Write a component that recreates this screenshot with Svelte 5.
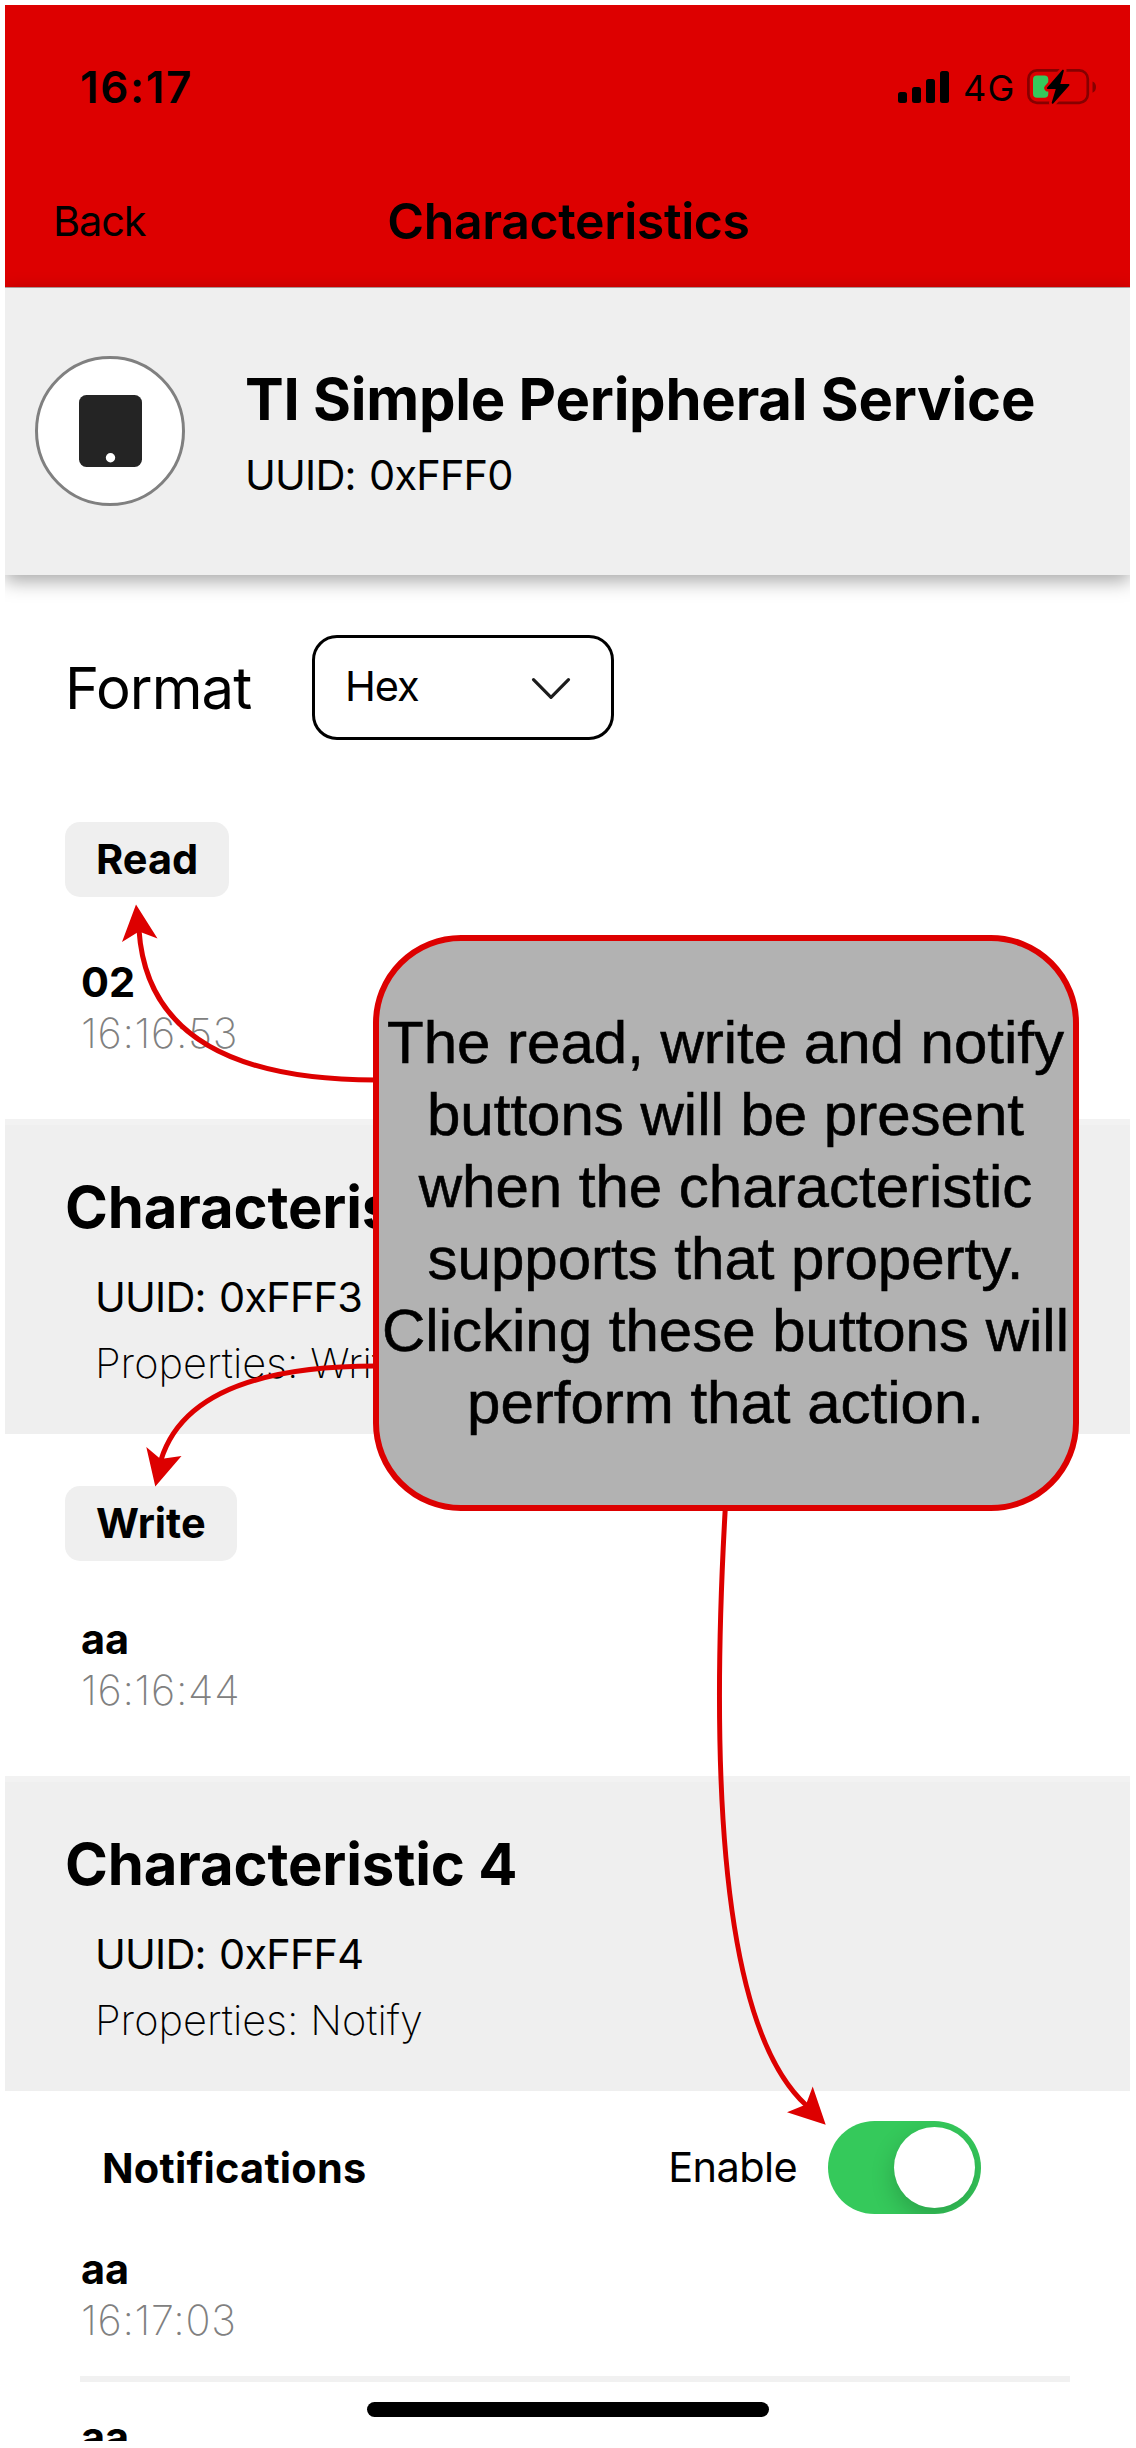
<script>
  const sections = [
    {
      action: 'Read',
      value: '02',
      time: '16:16:53'
    },
    {
      title: 'Characteristic 3',
      uuid: '0xFFF3',
      properties: 'Write',
      action: 'Write',
      value: 'aa',
      time: '16:16:44'
    },
    {
      title: 'Characteristic 4',
      uuid: '0xFFF4',
      properties: 'Notify',
      notify: true,
      value: 'aa',
      time: '16:17:03'
    }
  ];

  const note = [
    'The read, write and notify',
    'buttons will be present',
    'when the characteristic',
    'supports that property.',
    'Clicking these buttons will',
    'perform that action.'
  ];
</script>

<div class="page">
  <div class="screen">
    <header class="top">
      <div class="status">
        <span class="clock">16:17</span>
        <div class="indicators">
          <svg class="bars" width="51" height="32" viewBox="0 0 51 32">
            <rect x="0" y="21" width="9" height="11" rx="2.5" />
            <rect x="14" y="16" width="9" height="16" rx="2.5" />
            <rect x="28" y="8" width="9" height="24" rx="2.5" />
            <rect x="42" y="0" width="9" height="32" rx="2.5" />
          </svg>
          <span class="network">4G</span>
          <svg class="battery" width="70" height="38" viewBox="0 0 70 38">
            <rect x="1.4" y="2.4" width="59.4" height="32.400" rx="8.5" fill="none" stroke="#860000" stroke-width="2.7" />
            <path d="M65.500 13.500C68 14.300 69 16.600 69 19s-1 4.900-3.500 5.700z" fill="#860000" />
            <rect x="6" y="7.500" width="15.300" height="22.300" rx="4" fill="#35c95b" />
            <path class="bolt-gap" d="M36 2.500L20.800 20H30L25.600 34.800L41.600 16.800H32.200Z" />
            <path class="bolt" d="M36 2.500L20.800 20H30L25.600 34.800L41.600 16.800H32.200Z" />
          </svg>
        </div>
      </div>
      <nav class="nav">
        <span class="back">Back</span>
        <h1>Characteristics</h1>
      </nav>
    </header>

    <div class="service">
      <div class="avatar">
        <svg width="63" height="72" viewBox="0 0 63 72">
          <rect width="63" height="72" rx="7.500" fill="#242424" />
          <circle cx="31.500" cy="62.700" r="4.700" fill="#fff" />
        </svg>
      </div>
      <div>
        <h2>TI Simple Peripheral Service</h2>
        <p class="uuid">UUID: 0xFFF0</p>
      </div>
    </div>

    <div class="format">
      <span class="format-label">Format</span>
      <div class="select">
        <span>Hex</span>
        <svg width="40" height="24" viewBox="0 0 40 24">
          <path d="M2.500 3.700L20 21.300L37.500 3.700" fill="none" stroke="#1c1c1c" stroke-width="3.200" stroke-linecap="round" stroke-linejoin="round" />
        </svg>
      </div>
    </div>

    {#each sections as s}
      {#if s.title}
        <div class="band">
          <h3>{s.title}</h3>
          <p class="uuid">UUID: {s.uuid}</p>
          <p class="props">Properties: {s.properties}</p>
        </div>
      {/if}
      {#if s.notify}
        <div class="notify">
          <span class="notify-title">Notifications</span>
          <span class="enable">Enable</span>
          <span class="toggle"><span class="knob"></span></span>
        </div>
      {:else}
        <div class="action" class:first={!s.title}>
          <button>{s.action}</button>
        </div>
      {/if}
      <div class="entry">
        <div class="value">{s.value}</div>
        <div class="time">{s.time}</div>
      </div>
    {/each}
    <div class="divider"></div>
    <div class="entry next">
      <div class="value">aa</div>
    </div>
  </div>

  <div class="home"></div>

  <svg class="arrows" width="1136" height="2448" viewBox="0 0 1136 2448">
    <path class="line" d="M376 1080Q149 1080 139 930" />
    <path class="tip" d="M136 904.500L157.500 938.500L139 931.500L122 942Z" />
    <path class="line" d="M376 1366Q190 1366 161 1460" />
    <path class="tip" d="M155.300 1486.500L146.300 1447L160.500 1459L181.500 1456Z" />
    <path class="line" d="M725.300 1508Q697 2005 806 2105" />
    <path class="tip" d="M825.700 2124.800L787 2112.300L806 2104.500L812.700 2086.500Z" />
  </svg>

  <div class="callout">
    {#each note as line}
      <div>{line}</div>
    {/each}
  </div>
</div>

<style>
  :global(body) {
    background: #fff;
  }

  .page {
    position: relative;
    box-sizing: border-box;
    width: 1136px;
    height: 2448px;
    padding: 5px 6px 7px 5px;
    overflow: hidden;
    background: #fff;
    color: #000;
    font: 400 41.5px Inter, sans-serif;
  }

  .screen {
    height: 2436px;
    overflow: hidden;
    background: #fff;
  }

  h1,
  h2,
  h3,
  p {
    margin: 0;
  }

  .top {
    box-sizing: border-box;
    height: 283px;
    background: #d00;
    border-bottom: 1px solid #b9a5a5;
  }

  .status {
    display: flex;
    align-items: center;
    justify-content: space-between;
    height: 164px;
    padding: 0 33px 0 75px;
  }

  .clock {
    font-size: 44px;
    font-weight: 600;
    letter-spacing: 1.65px;
  }

  .indicators {
    display: flex;
    align-items: center;
  }

  .network {
    width: 64px;
    padding: 2px 0 0 14px;
    box-sizing: border-box;
    margin-right: 14px;
    font-size: 36px;
    letter-spacing: 1.2px;
  }

  .bolt-gap {
    fill: #d00;
    stroke: #d00;
    stroke-width: 7px;
    stroke-linejoin: round;
  }

  .bolt {
    stroke: #000;
    stroke-width: 1.8px;
    stroke-linejoin: round;
  }

  .nav {
    display: grid;
    grid-template-columns: 1fr auto 1fr;
    align-items: center;
    height: 104px;
    padding-left: 2px;
  }

  .back {
    padding-left: 46px;
    font-size: 41.5px;
    letter-spacing: -1.1px;
  }

  h1 {
    font-size: 50px;
    font-weight: 600;
    letter-spacing: -0.4px;
  }

  .service {
    position: relative;
    box-sizing: border-box;
    display: flex;
    align-items: center;
    gap: 60px;
    height: 287px;
    padding: 0 0 1px 30px;
    background: #efefef;
    box-shadow: 0 6px 18px rgba(0, 0, 0, 0.35);
  }

  .avatar {
    box-sizing: border-box;
    display: flex;
    align-items: center;
    justify-content: center;
    width: 150px;
    height: 150px;
    background: #fff;
    border: 3px solid #808080;
    border-radius: 50%;
  }

  h2 {
    font-size: 58px;
    line-height: 72px;
    letter-spacing: -0.23px;
    font-weight: 700;
  }

  .service .uuid {
    margin-top: 15px;
    line-height: 50px;
  }

  .uuid {
    letter-spacing: -0.82px;
    word-spacing: 2.5px;
  }

  .format {
    display: flex;
    align-items: center;
    padding: 60px 0 0 60px;
  }

  .format-label {
    width: 247px;
    font-size: 58px;
    letter-spacing: -0.93px;
  }

  .select {
    box-sizing: border-box;
    display: flex;
    align-items: center;
    justify-content: space-between;
    width: 302px;
    height: 105px;
    padding: 0 40px 0 30px;
    border: 3px solid #000;
    border-radius: 25px;
    letter-spacing: -1px;
  }

  .select span {
    padding-bottom: 3px;
  }

  .action {
    padding: 52px 0 53px 60px;
  }

  .action.first {
    padding: 82px 0 60px 60px;
  }

  button {
    display: block;
    height: 75px;
    padding: 0 31px 2px;
    border: 0;
    border-radius: 15px;
    background: #efefef;
    color: #000;
    font: 700 41.5px Inter, sans-serif;
  }

  .entry {
    padding: 0 0 60px 76px;
    line-height: 51px;
  }

  .value {
    font-weight: 700;
  }

  .time {
    font-weight: 200;
    color: #808080;
    letter-spacing: 0.7px;
  }

  .band {
    box-sizing: border-box;
    height: 315px;
    padding: 46px 0 0 60px;
    background: #efefef;
    border-top: 6px solid #f2f2f2;
  }

  h3 {
    margin-bottom: 21px;
    font-size: 58px;
    line-height: 72px;
    font-weight: 700;
    letter-spacing: -0.15px;
  }

  .band p {
    padding-left: 30px;
    line-height: 66px;
  }

  .props {
    font-weight: 200;
  }

  .notify {
    display: flex;
    align-items: center;
    padding: 30px 149px 30px 97px;
  }

  .notify-title {
    flex: 1;
    font-weight: 700;
    letter-spacing: 0.23px;
  }

  .enable {
    margin-right: 31px;
    padding-bottom: 2px;
    letter-spacing: -0.6px;
  }

  .toggle {
    box-sizing: border-box;
    display: flex;
    justify-content: flex-end;
    width: 153px;
    height: 93px;
    padding: 6px;
    border-radius: 47px;
    overflow: hidden;
    background: #35c95b;
  }

  .knob {
    width: 81px;
    height: 81px;
    border-radius: 50%;
    background: #fff;
    box-shadow: 0 9px 24px rgba(0, 0, 0, 0.2);
  }

  .divider {
    height: 6px;
    margin: -30px 60px 30px 75px;
    background: #f1f1f1;
  }

  .next {
    padding-bottom: 0;
  }

  .home {
    position: absolute;
    left: 367px;
    top: 2402px;
    width: 402px;
    height: 15px;
    border-radius: 8px;
    background: #000;
  }

  .arrows {
    position: absolute;
    left: 0;
    top: 0;
  }

  .line {
    fill: none;
    stroke: #d00;
    stroke-width: 5px;
  }

  .tip {
    fill: #d00;
  }

  .callout {
    position: absolute;
    left: 372.5px;
    top: 935px;
    box-sizing: border-box;
    display: flex;
    flex-direction: column;
    align-items: center;
    justify-content: center;
    width: 706px;
    height: 576px;
    border: 6px solid #d00;
    border-radius: 88px;
    background: #b2b2b2;
    font: 60px/72px "Liberation Sans", sans-serif;
    -webkit-text-stroke: 0.6px #000;
    white-space: nowrap;
  }
</style>
